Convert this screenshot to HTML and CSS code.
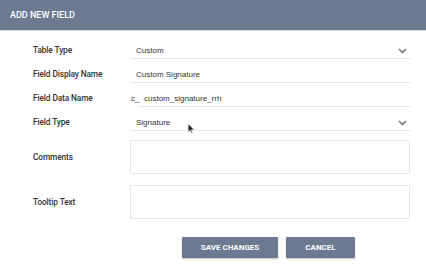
FILE: index.html
```html
<!DOCTYPE html>
<html lang="en">
<head>
    <meta charset="UTF-8">
    <meta name="viewport" content="width=device-width, initial-scale=1.0">
    <title>Add New Field</title>
    <link rel="stylesheet" href="styles.css">
</head>
<body>
    <div class="modal">
        <div class="modal-header">ADD NEW FIELD</div>
        <form class="field-form">
            <div class="form-row">
                <label>Table Type</label>
                <div class="select">
                    <span>Custom</span>
                    <svg class="chevron" width="9" height="6" viewBox="0 0 9 6"><path d="M1 1l3.5 3.5L8 1" fill="none" stroke="#666" stroke-width="1.3"/></svg>
                </div>
            </div>
            <div class="form-row">
                <label>Field Display Name</label>
                <div class="text-input">Custom Signature</div>
            </div>
            <div class="form-row">
                <label>Field Data Name</label>
                <span class="prefix">c_</span>
                <div class="text-input data-name">custom_signature_rrh</div>
            </div>
            <div class="form-row">
                <label>Field Type</label>
                <div class="select">
                    <span>Signature</span>
                    <svg class="chevron" width="9" height="6" viewBox="0 0 9 6"><path d="M1 1l3.5 3.5L8 1" fill="none" stroke="#666" stroke-width="1.3"/></svg>
                </div>
            </div>
            <div class="form-row area-row first-area">
                <label>Comments</label>
                <div class="textarea"></div>
            </div>
            <div class="form-row area-row">
                <label>Tooltip Text</label>
                <div class="textarea"></div>
            </div>
            <div class="actions">
                <button type="button" class="btn save">SAVE CHANGES</button>
                <button type="button" class="btn">CANCEL</button>
            </div>
        </form>
        <svg class="cursor" width="8" height="12" viewBox="0 0 8 12"><path d="M1 0.5v9l2.2-2.1 1.5 3.4 1.3-.6-1.5-3.3h3z" fill="#222" stroke="#fff" stroke-width="0.8"/></svg>
    </div>
</body>
</html>
```

FILE: styles.css
```css
* {
    box-sizing: border-box;
    margin: 0;
    padding: 0;
}
body {
    font-family: 'Roboto', Arial, sans-serif;
    background-color: #ffffff;
    color: #333333;
    width: 426px;
    height: 268px;
    overflow: hidden;
}
.modal {
    position: relative;
    height: 268px;
}
.modal-header {
    height: 31px;
    background-color: #6c7a91;
    border-bottom: 1px solid #d9dce2;
    color: #ffffff;
    font-size: 9px;
    font-weight: 500;
    padding-left: 10px;
    line-height: 30px;
}
.field-form {
    padding: 4px 16px 0 33px;
}
.form-row {
    display: flex;
    align-items: flex-end;
    height: 24px;
}
.form-row label {
    width: 97px;
    flex-shrink: 0;
    font-size: 8.3px;
    font-weight: 500;
    letter-spacing: -0.1px;
    color: #333333;
    padding-bottom: 4px;
}
.select, .text-input {
    flex: 1;
    height: 24px;
    border-bottom: 1px solid #e6e6e6;
    display: flex;
    align-items: flex-end;
    padding-left: 6px;
    padding-bottom: 3px;
    font-family: 'Liberation Sans', Arial, sans-serif;
    font-size: 8px;
    color: #333333;
}
.select span {
    flex: 1;
}
.chevron {
    margin-right: 3px;
    margin-bottom: 1px;
}
.prefix {
    width: 8px;
    font-family: 'Liberation Sans', Arial, sans-serif;
    font-size: 8px;
    padding-left: 1px;
    padding-bottom: 4px;
}
.data-name {
    padding-left: 6px;
}
.area-row {
    height: 34px;
    margin-top: 11px;
    align-items: center;
}
.area-row label {
    padding-bottom: 0;
}
.first-area {
    margin-top: 9px;
}
.textarea {
    flex: 1;
    height: 34px;
    border: 1px solid #e4e4e4;
    border-radius: 1px;
}
.actions {
    display: flex;
    gap: 8px;
    margin-top: 18px;
    padding-left: 149px;
}
.btn {
    height: 21px;
    background-color: #6b7a91;
    color: #ffffff;
    border: none;
    border-radius: 1px;
    box-shadow: 0 1px 2px rgba(0,0,0,0.25);
    font-family: 'Roboto', Arial, sans-serif;
    font-size: 8px;
    font-weight: 700;
    width: 69px;
}
.btn.save {
    width: 96px;
}
.cursor {
    position: absolute;
    left: 187px;
    top: 123px;
}
```
